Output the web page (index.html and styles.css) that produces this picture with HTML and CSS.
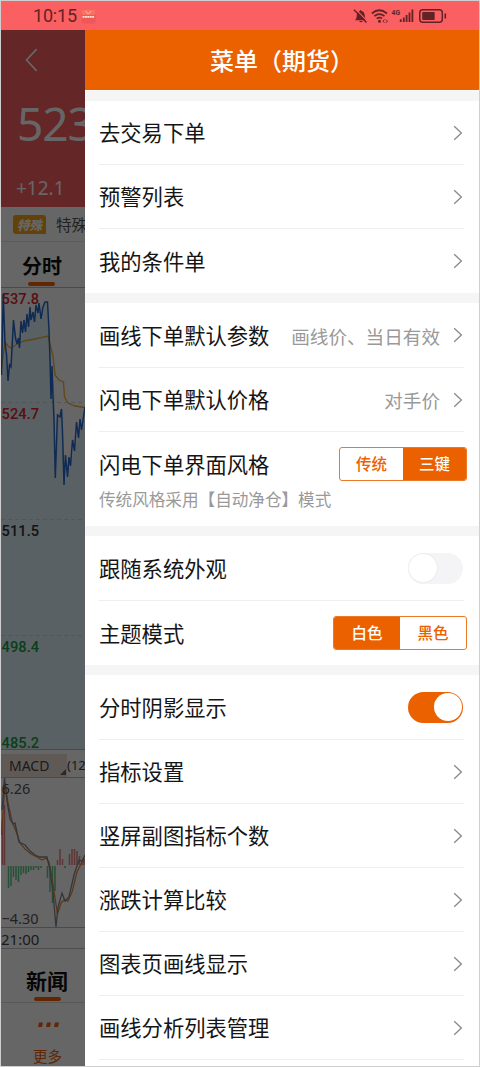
FILE: index.html
```html
<!DOCTYPE html>
<html lang="zh-CN">
<head>
<meta charset="utf-8">
<title>菜单（期货）</title>
<link rel="stylesheet" href="styles.css">
</head>
<body>
<svg width="0" height="0" class="defs"><defs>
  <symbol id="chev" viewBox="0 0 10 16"><path d="M1.2 1.2 8.4 8 1.2 14.8" fill="none" stroke="#888" stroke-width="1.3"/></symbol>
</defs></svg>
<div class="screen">
  <header class="status">
    <span class="time">10:15</span>
    <svg class="app" width="15" height="15" viewBox="0 0 15 15"><rect x=".5" y=".5" width="14" height="14" rx="2" fill="#ee5958"/><rect x=".5" y=".5" width="14" height="5.5" rx="2" fill="#f87164"/><path d="M4.500 2q3 5 5.500 0" fill="none" stroke="#fcc0a8"/><path d="M1.500 7.800h12" stroke="#ffe1d8" stroke-width="1.800" stroke-dasharray="2 .4"/></svg>
    <svg class="signals" width="96" height="18" viewBox="352 6 96 18">
      <g fill="#632326" stroke="none">
        <path d="M355 19.200c1.700-1.500 1.500-3 1.800-5.200.3-2.500 1.700-3.700 3-4 .2-1.400 1.500-1.400 1.700 0 1.800.4 3 1.900 3.200 3.900.2 2.400.3 3.800 1.800 5.300z"/>
        <path d="M359 20h4q-2 2.700-4 0z"/>
        <circle cx="379.500" cy="20.300" r="1.500"/>
      </g>
      <path d="M355.300 7.800 367.500 20.300" stroke="#fa5f62" stroke-width="1.200"/>
      <path d="M354 8.700 366.500 21.500" stroke="#632326" stroke-width="1.500"/>
      <g fill="none" stroke="#632326" stroke-width="1.700">
        <path d="M371.800 12.500q7.500-6.500 15.200 0M374.300 15.200q5-4.200 10.200 0M376.700 17.700q2.800-2.200 5.300-.3"/>
        <path d="m384.400 18.600-1.400 1.600 1.400 1.600m1.600-3.200 1.400 1.600-1.400 1.600" stroke-width="1"/>
        <path d="M400.700 18.300V21M403.800 16.500V21M406.600 14V21M409.500 11.500V21M412.400 8.500V21" stroke-width="1.800"/>
        <rect x="419.800" y="8.800" width="22.500" height="12.400" rx="3" stroke-width="1.500"/>
        <path d="M445.300 12.500v5" stroke-width="1.600"/>
      </g>
      <rect x="422.200" y="11" width="12.500" height="8" rx="1" fill="#632326"/>
      <text x="391.500" y="13.600" class="net" textLength="8.500" lengthAdjust="spacingAndGlyphs">4G</text>
    </svg>
  </header>
  <div class="body">
    <section class="quote">
      <div class="price-panel">
        <svg class="back" width="14" height="24" viewBox="0 0 14 24"><path d="M11.700 1.200 1.500 12 11.700 22.800" fill="none" stroke="#fff" stroke-width="1.700"/></svg>
        <div class="price">523</div>
        <div class="change">+12.1</div>
      </div>
      <div class="special"><span class="tag">特殊</span><span class="note">特殊</span></div>
      <div class="tab"><b>分时</b><i></i></div>
      <svg class="chart" width="84" height="463" viewBox="1 287 84 463">
        <path d="M1 375 3 292 5 345 8 380 10 365 13 320 18 345 25 325 35 312 47 302 51 355 55 400 55.500 478 58 414 62 410 64 484 70 465 80 430 85 407V750H1z" fill="#e2f2f9"/>
        <path d="M1 287.500h84M1 749.500h84" stroke="#b9b9b9"/>
        <path d="M1 402.500h84M1 519.500h84M1 635.500h84" stroke="#ccd6da" stroke-dasharray="4 3"/>
        <path d="M1.500 368 5 342 8 346 11 348 17 344 24 341 35 339 48 336 50 344 53 356 55 375 59 380 63.500 382 64.500 397 68 403 75 406 85 407.500" fill="none" stroke="#f4ad32" stroke-width="1.300"/>
        <path d="M1.500 375 3.200 294 5 343 6.500 354 8 381 9.500 365 11 367 13.500 320 15.500 338 17 344 18.500 338 19.500 348 21 321 22.500 333 24 320 25.500 332 27 314 28.500 327 30 307 31 320 33 312 34.500 322 36 305 38 313 39 303 41 319 43 307 45 302 47.500 302 49 330 50 360 51 399 52 366 53 397 54 420 55.300 478 57.500 415 60 417 61.500 409 62.500 432 64 485 65.500 455 67.500 477 69 457 70.500 466 72.500 440 74.500 451 76.500 422 78.500 438 80 419 81.500 430 83 420 85 407" fill="none" stroke="#286bd0" stroke-width="1.500"/>
        <g class="axis">
          <text x="1.500" y="304" fill="#e1262d">537.8</text>
          <text x="1.500" y="419" fill="#e1262d">524.7</text>
          <text x="1.500" y="536" fill="#303030">511.5</text>
          <text x="1.500" y="651.500" fill="#12a040">498.4</text>
          <text x="1.500" y="747.500" fill="#12a040">485.2</text>
        </g>
      </svg>
      <div class="indicator"><span>MACD</span><em>(12</em></div>
      <svg class="macd" width="84" height="151" viewBox="1 777 84 151">
        <path d="M1 777.500h84M1 927.500h84" stroke="#b9b9b9"/>
        <path d="M2.500 865v-45M4.500 865v-60M57.500 865v-5M60 865v-16M62.500 865v-6M69.500 865v-11M72 865v-16M74.500 865v-16M77 865v-14M79.500 865v-9M82 865v-4M84 865v-7" stroke="#e88588" stroke-width="1.500"/>
        <path d="M8.500 866v22M11 866v20M13.500 866v11M16 866v14M18.500 866v16M21 866v9M23.500 866v7M26 866v8M28.500 866v6M31 866v4M33.500 866v4M36 866v2M38.500 866v4M41 866v2M47.500 866v12M50 866v26M52.500 866v37M55 866v25M65 866v2" stroke="#5cc88b" stroke-width="1.500"/>
        <path d="M1.500 835 5 783 8 803 12 821 17 834 20 843 25 849 31 854 37 857 42 860 46 858 49 862 52 878 55 898 57.500 914 61 903 64 900 68 901 72 892 77 872 82 862 85 860" fill="none" stroke="#e98842" stroke-width="1.300"/>
        <path d="M2 810 4.500 778 7 801 10 819 13 824 15 823 19 842 25 845 30 851 35 855 40 857 47 857 50 870 53 893 56 927 58 907 62 893 65 901 69 897 74 875 79 860 82 861 85 855" fill="none" stroke="#7e8796" stroke-width="1.300"/>
        <g class="range"><text x="1.500" y="794">6.26</text><text x="1.500" y="924">−4.30</text></g>
      </svg>
      <div class="session">21:00</div>
      <div class="news"><b>新闻</b><i></i></div>
      <div class="more"><svg width="22" height="6" viewBox="0 0 22 6"><path d="M2 .5h4L5 5H1zM10 .5h4L13 5H9zM18 .5h4L21 5h-4z" fill="#f06010"/></svg><span>更多</span></div>
      <div class="mask"></div>
    </section>
    <main class="drawer">
      <h1>菜单（期货）</h1>
      <div class="group">
        <div class="row"><span>去交易下单</span><svg class="chev"><use href="#chev"/></svg></div>
        <div class="row"><span>预警列表</span><svg class="chev"><use href="#chev"/></svg></div>
        <div class="row last"><span>我的条件单</span><svg class="chev"><use href="#chev"/></svg></div>
      </div>
      <div class="group">
        <div class="row tall"><span>画线下单默认参数</span><small>画线价、当日有效</small><svg class="chev"><use href="#chev"/></svg></div>
        <div class="row"><span>闪电下单默认价格</span><small>对手价</small><svg class="chev"><use href="#chev"/></svg></div>
        <div class="row last choice"><span>闪电下单界面风格</span><div class="seg"><b>传统</b><b class="on">三键</b></div></div>
        <p class="hint">传统风格采用【自动净仓】模式</p>
      </div>
      <div class="group">
        <div class="row tall"><span>跟随系统外观</span><div class="switch"></div></div>
        <div class="row last choice"><span>主题模式</span><div class="seg wide"><b class="on">白色</b><b>黑色</b></div></div>
      </div>
      <div class="group">
        <div class="row tall"><span>分时阴影显示</span><div class="switch checked"></div></div>
        <div class="row"><span>指标设置</span><svg class="chev"><use href="#chev"/></svg></div>
        <div class="row"><span>竖屏副图指标个数</span><svg class="chev"><use href="#chev"/></svg></div>
        <div class="row"><span>涨跌计算比较</span><svg class="chev"><use href="#chev"/></svg></div>
        <div class="row"><span>图表页画线显示</span><svg class="chev"><use href="#chev"/></svg></div>
        <div class="row"><span>画线分析列表管理</span><svg class="chev"><use href="#chev"/></svg></div>
      </div>
    </main>
  </div>
</div>
</body>
</html>
```
FILE: styles.css
```css
* { box-sizing: border-box; }
body { margin: 0; font-family: "Noto Sans CJK SC", sans-serif; }
b, em, i { font-style: normal; }
.defs { display: block; }
.screen { width: 480px; height: 1067px; border: 1px solid #cfcfcf; overflow: hidden; background: #fff; }
.status { height: 29px; background: #fa5f62; display: flex; align-items: center; padding: 0 31px 0 32px; }
.time { font: 18px/29px Roboto, sans-serif; color: #632326; width: 48px; letter-spacing: -.2px; }
.app { margin-top: 1px; }
.signals { margin-left: auto; }
.net { font: bold 7px Roboto, sans-serif; fill: #632326; }
.body { display: flex; height: 1036px; }

.quote { position: relative; width: 84px; flex: none; overflow: hidden; background: #fff; white-space: nowrap; }
.mask { position: absolute; inset: 0; background: rgba(0, 0, 0, .6); }
.price-panel { height: 177px; background: #fa5f62; color: #fff; padding: 18px 0 0 15px; }
.back { display: block; margin-left: 9px; }
.price { font: 46px/54px "Noto Sans", sans-serif; margin: 24px 0 0 1px; letter-spacing: -1px; }
.change { font: 19px/24px "Noto Sans", sans-serif; margin-top: 26px; }
.special { height: 35px; display: flex; align-items: center; padding-left: 12px; gap: 10px; border-bottom: 1px solid #e6e6e6; }
.tag { background: #f7a512; color: #fff; font-size: 12.500px; line-height: 19px; height: 19px; width: 33px; flex: none; text-align: center; border-radius: 3px 3px 0 3px; font-weight: 900; font-style: italic; }
.note { font-size: 15.500px; color: #555; }
.tab, .news { display: flex; flex-direction: column; }
.tab b { font-size: 20px; line-height: 24px; padding: 12px 0 0 21px; color: #111; }
.tab { height: 45px; }
.tab i { width: 27px; height: 4px; border-radius: 2px; background: #f56000; margin: 4px 0 0 27px; }
.chart, .macd { display: block; }
.axis text { font: 500 14.600px Roboto, sans-serif; letter-spacing: .1px; }
.indicator { height: 27px; display: flex; align-items: center; font: 14px/23px "Noto Sans", sans-serif; color: #444; padding-top: 4px; }
.indicator span { background: #efe2d9; width: 66px; padding-left: 8px; position: relative; flex: none; }
.indicator span::after { content: ""; position: absolute; right: 1px; bottom: 2px; border-left: 6px solid transparent; border-bottom: 6px solid #666; }
.indicator em { font-size: 13px; }
.range text { font: 14.500px "Noto Sans", sans-serif; fill: #555; }
.session { height: 21px; font: 15px/22px "Noto Sans", sans-serif; color: #444; border-bottom: 1px solid #c4c4c4; }
.news { height: 54px; border-bottom: 1px solid #ddd; }
.news b { font-size: 21px; line-height: 26px; padding: 18px 0 0 25px; color: #111; }
.news i { width: 27px; height: 4px; border-radius: 2px; background: #f56000; margin: 4px 0 0 33px; }
.more { display: flex; flex-direction: column; padding: 19px 0 0 32px; color: #f06010; font-size: 14.500px; line-height: 20px; gap: 18px; }
.more svg { margin-left: 4px; }

.drawer { flex: 1; background: #fff; }
h1 { margin: 0 0 1px; height: 60px; background: #eb6100; color: #fff; font-size: 24px; line-height: 60px; font-weight: 500; text-align: center; }
.group { border-top: 10px solid #f5f5f5; padding: 0 15px 0 14px; }
.row { height: 64px; display: flex; align-items: center; border-bottom: 1px solid #eee; color: #151515; }
.row.tall { height: 65px; }
.row.last { border-bottom: 0; }
.row > span { font-size: 21.300px; line-height: 30px; margin: 0 auto 0 0; padding-bottom: 1px; }
.row small { font-size: 18.600px; color: #999; margin-right: 13px; }
.chev { width: 10px; height: 16px; margin-right: 1px; flex: none; }
.choice { margin-right: -3px; }
.seg { width: 128px; height: 34px; display: flex; border: 1px solid #eb7a28; border-radius: 3px; overflow: hidden; }
.seg.wide { width: 134px; }
.seg b { flex: 1; font-size: 15.500px; line-height: 31px; text-align: center; font-weight: 500; color: #eb6100; }
.seg .on { background: #eb6100; color: #fff; }
.hint { margin: -8px 0 0; height: 38px; font-size: 16.600px; line-height: 22px; color: #999; }
.switch { width: 55px; height: 31px; border-radius: 16px; background: #f4f4f6; padding: 1px; margin-right: 1px; }
.switch::after { content: ""; display: block; width: 28px; height: 28px; border-radius: 50%; background: #fff; box-shadow: 0 0 2px #ddd; }
.checked { background: #eb6100; }
.checked::after { margin: .5px 0 0 25px; box-shadow: none; }
```
